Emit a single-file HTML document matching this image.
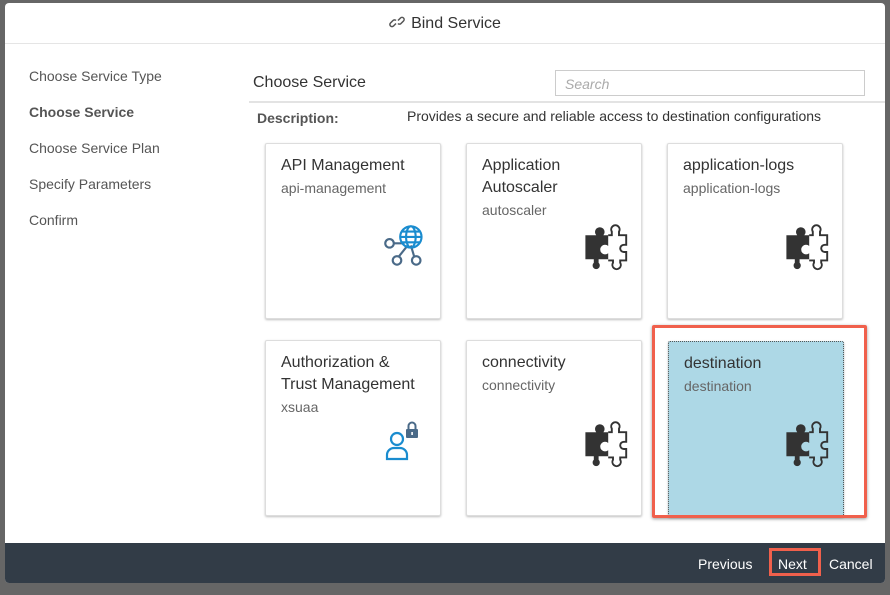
<!DOCTYPE html>
<html><head><meta charset="utf-8"><style>
*{margin:0;padding:0;box-sizing:border-box}
body{width:890px;height:595px;background:#666;font-family:"Liberation Sans",sans-serif;position:relative;overflow:hidden}
.dlg{position:absolute;left:5px;top:3px;width:880px;height:580px;background:#fff;border-radius:4px;overflow:hidden}
.hdr{position:absolute;left:0;top:0;width:880px;height:41px;border-bottom:1px solid #e5e5e5;text-align:center;font-size:16px;color:#333;line-height:42px}
.a{position:absolute;white-space:nowrap}
.nav{left:24px;font-size:14px;color:#555}
.card{position:absolute;width:176px;height:176px;background:#fff;border:1px solid #ddd;box-shadow:0 1px 2px rgba(0,0,0,.25);border-radius:2px}
.card .t{position:absolute;left:15px;top:11px;font-size:16px;color:#333;line-height:22px}
.card .s{font-size:14px;color:#666}
.pz{position:absolute;left:116px;top:78px}
</style></head><body>
<div class="dlg">
<div class="hdr"><svg width="16" height="16" viewBox="0 0 16 16" style="vertical-align:-2px;margin-right:6px"><g fill="none" stroke="#555" stroke-width="1.5"><path d="M7 9.5l-2.5 2.5a2 2 0 0 1-3-3L4 6.5a2 2 0 0 1 3 0"/><path d="M9 6.5l2.5-2.5a2 2 0 0 1 3 3L12 9.5a2 2 0 0 1-3 0"/></g></svg>Bind Service</div>
<div class="a nav" style="top:65px">Choose Service Type</div>
<div class="a nav" style="top:101px;font-weight:bold">Choose Service</div>
<div class="a nav" style="top:137px">Choose Service Plan</div>
<div class="a nav" style="top:173px">Specify Parameters</div>
<div class="a nav" style="top:209px">Confirm</div>
<div class="a" style="left:248px;top:71px;font-size:16px;color:#333">Choose Service</div>
<div class="a" style="left:550px;top:67px;width:310px;height:26px;border:1px solid #ccc;font-size:14px;color:#aaa;font-style:italic;padding:5px 9px">Search</div>
<div class="a" style="left:244px;top:98px;width:636px;border-top:2px solid #e3e3e3"></div>
<div class="a" style="left:252px;top:107px;font-size:14px;font-weight:bold;color:#555">Description:</div>
<div class="a" style="left:402px;top:105px;font-size:14px;color:#333">Provides a secure and reliable access to destination configurations</div>
</div>
<svg width="0" height="0" style="position:absolute"><defs><g id="pz" transform="scale(1.2)"><path d="M2 11h9a4 4 0 1 1 6 0h4v9a4 4 0 1 0 0 6v5h-8v3a3 3 0 1 1-4 0v-3H2z" fill="#333"/><path d="M21 11h3v-3a3.5 3.5 0 1 1 6 0v3h6v8h-2a3 3 0 1 0 0 6h2v7h-5v2a3.5 3.5 0 1 1-6 0v-2h-4" fill="none" stroke="#333" stroke-width="1.6"/></g></defs></svg>
<div class="card" style="left:265px;top:143px"><div class="t">API Management<br><span class="s">api-management</span></div>
<svg style="position:absolute;left:115px;top:78px" width="48" height="48" viewBox="0 0 45 45"><g fill="none" stroke-width="2"><g stroke="#4a6a88"><circle cx="8" cy="20" r="4"/><circle cx="15" cy="36" r="4"/><circle cx="33" cy="36" r="4"/><path d="M12 20h10M17 32l8-10M31 32l-3-10"/></g><g stroke="#1a8ccf"><circle cx="28" cy="14" r="10"/><ellipse cx="28" cy="14" rx="4.5" ry="10"/><path d="M18 14h20M20 9h16M20 19h16"/></g></g></svg></div>
<div class="card" style="left:466px;top:143px"><div class="t">Application<br>Autoscaler<br><span class="s">autoscaler</span></div><svg class="pz" width="48" height="50"><use href="#pz"/></svg></div>
<div class="card" style="left:667px;top:143px"><div class="t">application-logs<br><span class="s">application-logs</span></div><svg class="pz" width="48" height="50"><use href="#pz"/></svg></div>
<div class="card" style="left:265px;top:340px"><div class="t">Authorization &amp;<br>Trust Management<br><span class="s">xsuaa</span></div>
<svg style="position:absolute;left:116px;top:80px" width="45" height="45" viewBox="0 0 45 45"><g fill="none" stroke="#1a8ccf" stroke-width="2.2"><circle cx="15" cy="18" r="6"/><path d="M5 38v-4a7 7 0 0 1 7-7h6a7 7 0 0 1 7 7v4z"/></g><rect x="24" y="8" width="12" height="9" rx="1" fill="#4a6a88"/><path d="M26.5 8V5a3.5 3.5 0 0 1 7 0v3" fill="none" stroke="#4a6a88" stroke-width="2"/><rect x="29.3" y="11" width="1.6" height="3" fill="#fff"/></svg></div>
<div class="card" style="left:466px;top:340px"><div class="t">connectivity<br><span class="s">connectivity</span></div><svg class="pz" width="48" height="50"><use href="#pz"/></svg></div>
<div class="card" style="left:668px;top:341px;background:#add8e6;border:1px dotted #555"><div class="t">destination<br><span class="s">destination</span></div><svg class="pz" style="left:115px;top:77px" width="48" height="50"><use href="#pz"/></svg></div>
<div class="a" style="left:652px;top:325px;width:215px;height:193px;border:3px solid #f0604c;border-radius:2px;box-shadow:0 1px 3px rgba(0,0,0,.4)"></div>
<div class="a" style="left:5px;top:543px;width:880px;height:40px;background:#323c47;border-radius:0 0 4px 4px"></div>
<div class="a" style="left:698px;top:556px;font-size:14px;color:#fff">Previous</div>
<div class="a" style="left:769px;top:548px;width:52px;height:28px;border:3px solid #f0604c;font-size:14px;color:#fff;padding:5px 0 0 6px">Next</div>
<div class="a" style="left:829px;top:556px;font-size:14px;color:#fff">Cancel</div>
</body></html>
